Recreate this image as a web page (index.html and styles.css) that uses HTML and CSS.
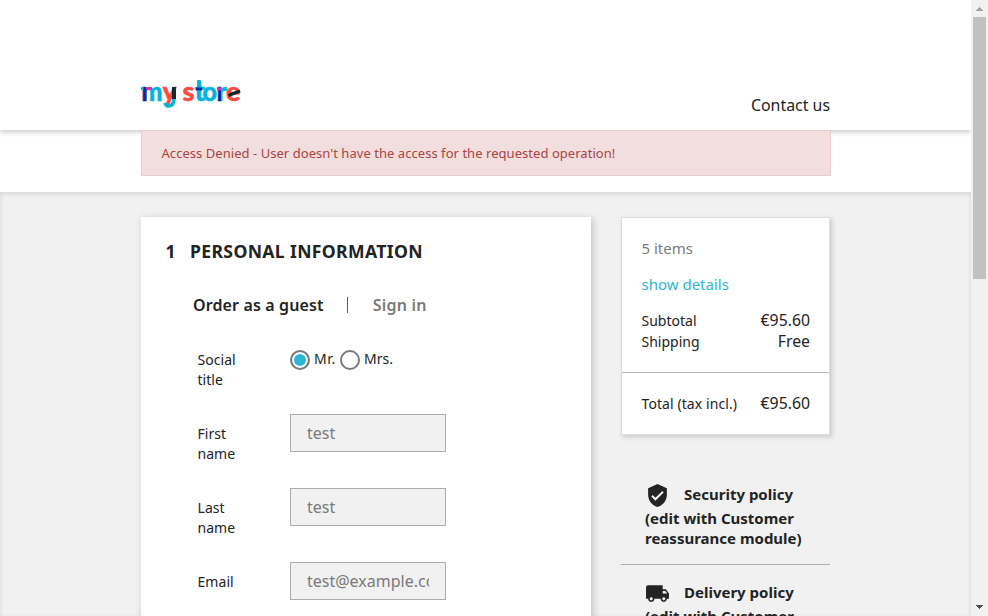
FILE: index.html
```html
<!DOCTYPE html>
<html lang="en">
<head>
<meta charset="utf-8">
<title>my store</title>
<link rel="stylesheet" href="styles.css">
</head>
<body>
<div class="page">
  <header class="header">
    <div class="container header-row">
      <svg class="logo" width="100" height="38" viewBox="0 0 100 38" role="img">
        <defs>
          <linearGradient id="gm"><stop offset=".3" stop-color="#0c2a9b"/><stop offset=".3" stop-color="#04b2de"/></linearGradient>
          <linearGradient id="gr"><stop offset=".45" stop-color="#0c2a9b"/><stop offset=".45" stop-color="#04b2de"/></linearGradient>
          <linearGradient id="gy" gradientUnits="userSpaceOnUse" x1="21.500" x2="43.500" y1="8" y2="30"><stop offset=".36" stop-color="#ff4b42"/><stop offset=".36" stop-color="#0a2b38"/><stop offset=".49" stop-color="#0a2b38"/><stop offset=".49" stop-color="#04b2de"/></linearGradient>
        </defs>
        <g class="logo-text">
          <text x="0.500" y="22.500" textLength="21" lengthAdjust="spacingAndGlyphs" fill="url(#gm)" stroke="url(#gm)">m</text>
          <text x="21.500" y="22.500" textLength="14" lengthAdjust="spacingAndGlyphs" fill="#ff4b42" stroke="#ff4b42">y</text>
          <text x="41.500" y="22.500" textLength="12" lengthAdjust="spacingAndGlyphs" fill="#ff4b42" stroke="#ff4b42">s</text>
          <text x="53.500" y="22.500" textLength="10.500" lengthAdjust="spacingAndGlyphs" fill="#04b2de" stroke="#04b2de">t</text>
          <text x="61.500" y="22.500" textLength="14.500" lengthAdjust="spacingAndGlyphs" fill="#04b2de" stroke="#04b2de">o</text>
          <text x="75.500" y="22.500" textLength="10.500" lengthAdjust="spacingAndGlyphs" fill="url(#gr)" stroke="url(#gr)">r</text>
          <text x="85" y="22.500" textLength="14.500" lengthAdjust="spacingAndGlyphs" fill="#ff4b42" stroke="#ff4b42">e</text>
        </g>
        <rect x="5" y="9" width="6" height="3" rx="1" fill="#d72dbb"/>
        <rect x="0" y="9" width="2.500" height="3" fill="#04b2de"/>
        <path d="M33 9v12" stroke="#0a2b38" stroke-width="4"/>
        <path d="M33 21c0 8-8 9-9 4" fill="none" stroke="#04b2de" stroke-width="3.500"/>
        <rect x="56" y="2" width="4" height="8" rx="1" fill="#04b2de"/>
        <rect x="55" y="9.500" width="6" height="3" fill="#0c2a9b"/>
        <rect x="76" y="9.500" width="4" height="3" fill="#d72dbb"/>
        <path d="M87.500 17.500l11.500-4.500" stroke="#0a2b38" stroke-width="3"/>
      </svg>
      <a class="contact">Contact us</a>
    </div>
  </header>
  <section class="notifications">
    <div class="container"><div class="alert">Access Denied - User doesn't have the access for the requested operation!</div></div>
  </section>
  <main class="wrapper">
    <div class="container columns">
      <section class="step">
        <h1><span class="number">1</span>Personal Information</h1>
        <div class="tabs"><b>Order as a guest</b><i class="divider"></i><b class="muted">Sign in</b></div>
        <div class="row"><label>Social<br>title</label><div class="radios"><span class="radio on"></span><span class="mr">Mr.</span><span class="radio"></span><span>Mrs.</span></div></div>
        <div class="row"><label>First<br>name</label><div class="field"><span>test</span></div></div>
        <div class="row"><label>Last<br>name</label><div class="field"><span>test</span></div></div>
        <div class="row"><label>Email</label><div class="field"><span>test@example.com</span></div></div>
      </section>
      <aside class="side">
        <div class="card">
          <div class="summary">
            <p class="items">5 items</p>
            <p class="details">show details</p>
            <div class="line"><span>Subtotal</span><span class="value">€95.60</span></div>
            <div class="line"><span>Shipping</span><span class="value">Free</span></div>
          </div>
          <div class="total line"><span>Total (tax incl.)</span><span class="value">€95.60</span></div>
        </div>
        <ul class="reassurance">
          <li><svg width="25" height="25" viewBox="0 0 24 24"><path d="M12 1L3 5v6c0 5.550 3.840 10.740 9 12 5.160-1.260 9-6.450 9-12V5l-9-4zm-2 16l-4-4 1.410-1.410L10 14.170l6.590-6.590L18 9l-8 8z"/></svg><span class="first">Security policy</span><br>(edit with Customer<br>reassurance module)</li>
          <li><svg width="25" height="25" viewBox="0 0 24 24"><path d="M20 8h-3V4H3c-1.100 0-2 .9-2 2v11h2c0 1.660 1.340 3 3 3s3-1.340 3-3h6c0 1.660 1.340 3 3 3s3-1.340 3-3h2v-5l-3-4zM6 18.500c-.83 0-1.500-.67-1.500-1.500s.67-1.500 1.500-1.500 1.500.67 1.500 1.500-.67 1.500-1.500 1.500zm13.500-9l1.960 2.500H17V9.500h2.500zm-1.500 9c-.83 0-1.500-.67-1.500-1.500s.67-1.500 1.500-1.500 1.500.67 1.500 1.500-.67 1.500-1.500 1.500z"/></svg><span class="first">Delivery policy</span><br>(edit with Customer<br>reassurance module)</li>
        </ul>
      </aside>
    </div>
  </main>
</div>
<div class="scrollbar">
  <svg width="17" height="17" shape-rendering="crispEdges"><path d="M8 7h1v1h1v1h1v1h1v1H5v-1h1V9h1V8h1z" fill="#a0a0a0"/></svg>
  <div class="thumb"></div>
  <svg class="down" width="17" height="17" shape-rendering="crispEdges"><path d="M5 6h7v1h-1v1h-1v1H9v1H8V9H7V8H6V7H5z" fill="#505050"/></svg>
</div>
</body>
</html>
```
FILE: styles.css
```css
* { box-sizing: border-box; }
html, body { margin: 0; height: 616px; overflow: hidden; }
body { display: flex; background: #f1f1f1; color: #232323; font: 14px/20px "Noto Sans", sans-serif; }
.page { width: 971px; height: 616px; overflow: hidden; background: #fff; }
.container { width: 690px; margin-left: 141px; }
.header { position: relative; height: 130px; background: #fff; box-shadow: 0 2px 5px rgba(0,0,0,.22); }
.header-row { display: flex; justify-content: space-between; padding-top: 78px; }
.logo { overflow: visible; }
.logo-text { font-family: Lato, sans-serif; font-weight: 900; font-size: 26px; stroke-width: .5px; }
.contact { margin: 17px 1px 0 0; font-size: 15.900px; }
.notifications { position: relative; height: 62px; }
.alert { height: 46px; padding: 12px 19.500px 0; background: #f2dede; border: 1px solid #ebcccc; color: #a94442; font-size: 13px; line-height: 20px; letter-spacing: .045px; }
.wrapper { height: 424px; background: #f1f1f1; box-shadow: inset 0 2px 5px rgba(0,0,0,.11); padding-top: 25px; }
.columns { display: flex; gap: 30px; }
.step { width: 450px; height: 440px; padding: 24px 24px; background: #fff; box-shadow: 2px 2px 8px rgba(0,0,0,.2); }
h1 { margin: 0; font-size: 17.600px; line-height: 21px; font-weight: 700; text-transform: uppercase; white-space: nowrap; letter-spacing: .35px; }
.number { display: inline-block; width: 25px; padding-left: .5px; }
.tabs { display: flex; align-items: center; height: 24px; margin: 31px 0 32px 28px; font-size: 16px; }
.tabs b { font-weight: 600; letter-spacing: .13px; }
.divider { width: 1px; height: 16px; background: #1b6cb3; margin: 0 25px 0 23px; }
.tabs .muted { color: #7a7a7a; letter-spacing: .2px; }
.row { display: flex; height: 74px; padding-left: 32px; }
.row label { width: 93px; padding: 1px 0 0 .5px; letter-spacing: .05px; }
.radios { display: flex; height: 20px; font-size: 14px; }
.radio { width: 20px; height: 20px; margin-right: 4px; border: 2px solid #7a7a7a; border-radius: 50%; margin-top: 1px; }
.radio.on { background: #2fb5d2; box-shadow: inset 0 0 0 2px #fff; }
.mr { width: 26px; letter-spacing: .6px; }
.row label + .field { margin-top: -9px; }
.field { width: 156px; height: 38px; padding: 8px 16px; background: #f1f1f1; border: 1px solid #acacac; color: #7a7a7a; font-size: 16px; }
.field span { display: block; overflow: hidden; white-space: nowrap; }
.side { width: 210px; }
.card { width: 209px; height: 218px; border: 1px solid #ddd; background: #fff; box-shadow: 2px 2px 5px rgba(0,0,0,.17); }
.summary { height: 155px; padding: 20px 19px 0 19.500px; border-bottom: 1px solid #b8b8b8; }
.summary p { margin: 0 0 16px; font-size: 15px; line-height: 20px; }
.items { color: #7a7a7a; }
.details { color: #2fb5d2; }
.line { display: flex; justify-content: space-between; line-height: 21px; }
.value { font-size: 15.800px; }
.total { padding: 20px 19px 20px 19.500px; letter-spacing: .08px; }
.total .value { letter-spacing: 0; }
.reassurance { list-style: none; margin: 48px 0 0; padding: 0; font-size: 15px; font-weight: 700; }
.reassurance li { width: 209px; height: 82px; padding-left: 24px; border-bottom: 1px solid #b1b1b1; white-space: nowrap; }
.reassurance li + li { margin-top: 16px; }
.reassurance svg { vertical-align: middle; fill: #232323; }
.first { margin-left: 14px; }
.scrollbar { width: 17px; height: 616px; display: flex; flex-direction: column; }
.thumb { width: 13px; height: 262px; margin-left: 2px; background: #c1c1c1; }
.down { margin-top: auto; }
```
